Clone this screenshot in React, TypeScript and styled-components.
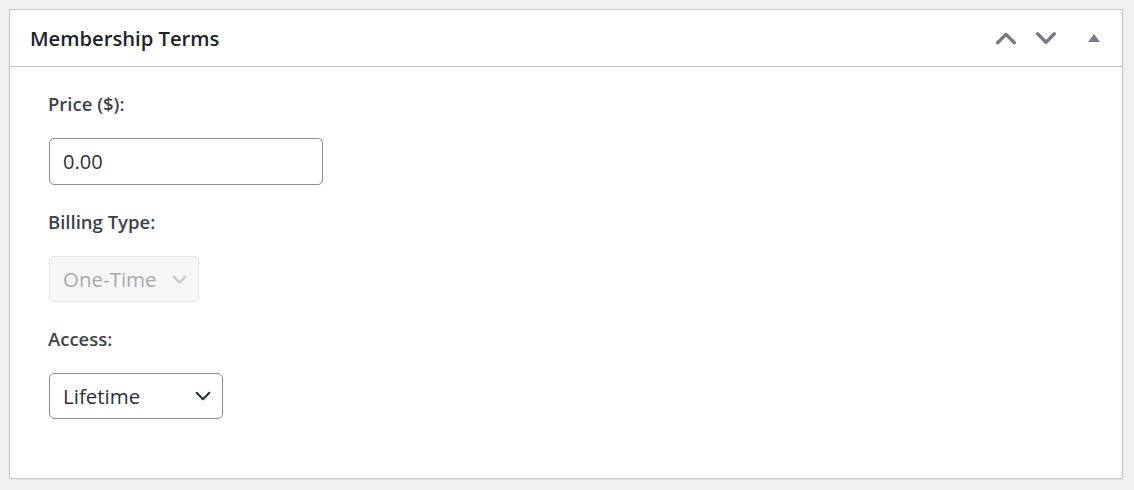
import * as React from 'react'
import styled, { createGlobalStyle } from 'styled-components'

const GlobalStyle = createGlobalStyle`
  html, body {
    margin: 0;
    padding: 0;
    background: #f0f0f1;
    font-family: 'Open Sans', 'Noto Sans', sans-serif;
    color: #1d2327;
  }
`

const Page = styled.div`
  padding: 9px 11px 11px 9px;
`

const Panel = styled.div`
  background: #fff;
  border: 1px solid #c3c4c7;
  box-shadow: 0 1px 1px rgba(0, 0, 0, 0.04);
  height: 470px;
  box-sizing: border-box;
`

const PanelHeader = styled.div`
  display: flex;
  align-items: center;
  height: 56px;
  border-bottom: 1px solid #c3c4c7;
  padding: 0 8px 0 20px;
`

const Title = styled.h2`
  flex: 1;
  margin: 0;
  font-size: 20.2px;
  font-weight: 600;
  color: #1d2327;
`

const Actions = styled.div`
  display: flex;
  align-items: center;
`

const IconButton = styled.button<{ $gap?: number }>`
  width: 40px;
  height: 40px;
  display: flex;
  align-items: center;
  justify-content: center;
  border: 0;
  background: none;
  padding: 0;
  margin-left: ${p => p.$gap ?? 0}px;
  color: #787c82;
  cursor: pointer;
`

const Body = styled.div`
  padding: 24px 38px 0 39px;
`

const Field = styled.div`
  margin-bottom: 24px;
`

const Label = styled.label`
  display: block;
  font-size: 18.5px;
  line-height: 26px;
  font-weight: 600;
  color: #3c434a;
  margin: 0 0 21px -1px;
`

const TextInput = styled.input`
  box-sizing: border-box;
  width: 274px;
  height: 47px;
  padding: 0 13px;
  border: 1px solid #8c8f94;
  border-radius: 5px;
  font-family: inherit;
  font-size: 20px;
  color: #2c3338;
  outline: none;
`

const Select = styled.div<{ $disabled?: boolean; $width: number }>`
  box-sizing: border-box;
  width: ${p => p.$width}px;
  height: 46px;
  display: flex;
  align-items: center;
  justify-content: space-between;
  padding: 0 10px 0 13px;
  border: 1px solid ${p => (p.$disabled ? '#e4e5e7' : '#8c8f94')};
  border-radius: 5px;
  background: ${p => (p.$disabled ? '#f6f7f7' : '#fff')};
  color: ${p => (p.$disabled ? '#a7aaad' : '#2c3338')};
  font-size: 20.5px;
  white-space: nowrap;
`

const Chevron = ({ size = 14, color = 'currentColor', up = false, width = 2.6 }: { size?: number; color?: string; up?: boolean; width?: number }) => (
  <svg width={size} height={size} viewBox="0 0 20 20" fill="none">
    <path
      d={up ? 'M3 14 L10 7 L17 14' : 'M3 6.5 L10 13.5 L17 6.5'}
      stroke={color}
      strokeWidth={width}
      strokeLinecap="round"
      strokeLinejoin="round"
    />
  </svg>
)

const App = () => {
  return (
    <Page>
      <GlobalStyle />
      <Panel>
        <PanelHeader>
          <Title>Membership Terms</Title>
          <Actions>
            <IconButton aria-label="Move up">
              <Chevron size={24} up width={2.8} />
            </IconButton>
            <IconButton aria-label="Move down">
              <Chevron size={24} width={2.8} />
            </IconButton>
            <IconButton aria-label="Toggle panel" $gap={8}>
              <svg width="14" height="10" viewBox="0 0 14 10">
                <path d="M7 1 L13 9 L1 9 Z" fill="#787c82" />
              </svg>
            </IconButton>
          </Actions>
        </PanelHeader>
        <Body>
          <Field>
            <Label>Price ($):</Label>
            <TextInput defaultValue="0.00" />
          </Field>
          <Field>
            <Label>Billing Type:</Label>
            <Select $disabled $width={150}>
              <span>One-Time</span>
              <Chevron size={17} color="#c3c4c7" width={2.2} />
            </Select>
          </Field>
          <Field>
            <Label>Access:</Label>
            <Select $width={174}>
              <span>Lifetime</span>
              <Chevron size={18} color="#2c3338" width={2.4} />
            </Select>
          </Field>
        </Body>
      </Panel>
    </Page>
  )
}

export default App
